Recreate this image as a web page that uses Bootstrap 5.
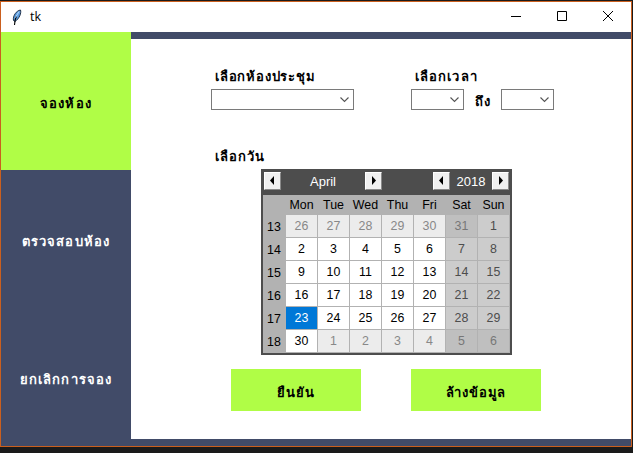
<!DOCTYPE html>
<html lang="th">
<head>
<meta charset="utf-8">
<title>tk</title>
<link href="https://cdn.jsdelivr.net/npm/bootstrap@5.3.0/dist/css/bootstrap.min.css" rel="stylesheet">
<style>
html,body{height:453px;overflow:hidden}
body{background:#1a1a1a;padding:1px 1px 6px 0;font-family:"Liberation Sans","DejaVu Sans",sans-serif;color:#000}
.win{width:632px;height:446px;border:1px solid #ca5f1e;background:#fff}
.titlebar{height:30px;font:12.5px/30px "Open Sans","Noto Sans",sans-serif}
.feather{margin-left:10px}
.ctl{width:46px;height:30px}
.main-area{height:414px;background:#414b68}
.side{width:130px}
.side-btn{height:138px;border:0;border-radius:0;padding:5px 0 0;color:#fff;background:#414b68}
.side-btn.on{background:#b0fd46;color:#000}
.th{font-size:13px;font-weight:700;line-height:20px;white-space:nowrap;letter-spacing:1.1px}
.th.tight{letter-spacing:.8px}
.field-label{padding-left:4px}
.date-label{padding:37px 0 0 4px}
.panel{width:500px;height:400px;margin-top:7px;padding:28px 0 0 80px}
.combo{height:21px;border:1px solid #7a7a7a;padding-right:4px}
.w-room{width:143px}.w-time{width:53px}
.combo-row{height:21px;margin-top:2px}
.until{width:37px;padding:3px 0 0 2px}
.col-room{width:200px}
.cal{width:251px;height:186px;border:2px solid #4d4d4d;border-top:0;margin:2px 0 0 50px;background:#b2b2b2}
.cal-head{height:26px;background:#4d4d4d;color:#fff;font-size:13px;line-height:25px;padding:0 1px}
.arr{width:17px;height:18px;margin-top:3px;background:#f0f0f0;border:1px solid #fff;border-right-color:#8a8a8a;border-bottom-color:#8a8a8a}
.arr svg{display:block}
.mon{width:84px}.yr{width:42px}
.cal-grid{display:grid;grid-template-columns:22px repeat(7,31px);grid-template-rows:19px repeat(6,22px);gap:1px;font-size:12.4px;text-align:center;line-height:22px}
.cal-grid>*{background:#fff}
.cal-grid .h,.cal-grid .w{background:#b2b2b2}
.cal-grid .h{line-height:20px}.cal-grid .w{line-height:24px}
.cal-grid .o{background:#ececec;color:#888}
.cal-grid .e{background:#ccc;color:#4d4d4d}
.cal-grid .x{background:#bfbfbf;color:#777}
.cal-grid .s{background:#0078d7;color:#fff}
.actions{gap:50px;padding:14px 0 0 20px}
.act{width:130px;height:42px;border:0;border-radius:0;background:#b0fd46;color:#000;padding:5px 0 0}
</style>
<script src="https://cdn.jsdelivr.net/npm/bootstrap@5.3.0/dist/js/bootstrap.bundle.min.js"></script>
</head>
<body>
<div class="win">
<header class="titlebar d-flex align-items-center">
<svg class="feather" width="12" height="17" viewBox="0 0 12 17"><path d="M2.500 11.500C1.500 7 5.500 1.500 9.500 1C10.500 4 8.500 9.500 4 12.500Z" fill="#5b9de0" stroke="#142338" stroke-width=".9"/><path d="M5.500 7C4 10 3.800 12 3.500 16" fill="none" stroke="#000" stroke-width="1.100"/><path d="M8 2.500L4.500 8.500" stroke="#b5d6f8"/></svg>
<span style="margin-left:7px">tk</span>
<svg class="ctl ms-auto" viewBox="0 0 46 30"><path d="M18 14.500H28" stroke="#000"/></svg>
<svg class="ctl" viewBox="0 0 46 30"><path d="M18.500 9.500h9v9h-9z" fill="none" stroke="#000"/></svg>
<svg class="ctl" viewBox="0 0 46 30"><path d="M18 9L28 19M28 9L18 19" stroke="#000"/></svg>
</header>
<div class="main-area d-flex">
<nav class="side d-flex flex-column">
<button class="btn side-btn on th">จองห้อง</button>
<button class="btn side-btn th">ตรวจสอบห้อง</button>
<button class="btn side-btn th">ยกเลิกการจอง</button>
</nav>
<main class="panel bg-white">
<section class="d-flex">
<div class="col-room"><div class="th tight field-label">เลือกห้องประชุม</div>
<div class="combo-row d-flex"><div class="combo w-room d-flex align-items-center justify-content-end"><svg width="9" height="6"><path d="M.5 .5L4.500 4.500L8.500 .5" fill="none" stroke="#555" stroke-width="1.100"/></svg></div></div></div>
<div><div class="th field-label">เลือกเวลา</div>
<div class="combo-row d-flex"><div class="combo w-time d-flex align-items-center justify-content-end"><svg width="9" height="6"><path d="M.5 .5L4.500 4.500L8.500 .5" fill="none" stroke="#555" stroke-width="1.100"/></svg></div>
<div class="th until text-center">ถึง</div>
<div class="combo w-time d-flex align-items-center justify-content-end"><svg width="9" height="6"><path d="M.5 .5L4.500 4.500L8.500 .5" fill="none" stroke="#555" stroke-width="1.100"/></svg></div></div></div>
</section>
<div class="th date-label">เลือกวัน</div>
<div class="cal">
<div class="cal-head d-flex">
<div class="arr"><svg width="15" height="16"><path d="M9 3v9L5 7.500z"/></svg></div><div class="mon text-center">April</div><div class="arr"><svg width="15" height="16"><path d="M6 3v9l4-4.500z"/></svg></div>
<div class="arr ms-auto"><svg width="15" height="16"><path d="M9 3v9L5 7.500z"/></svg></div><div class="yr text-center">2018</div><div class="arr"><svg width="15" height="16"><path d="M6 3v9l4-4.500z"/></svg></div>
</div>
<div class="cal-grid">
<div class="h"></div><div class="h">Mon</div><div class="h">Tue</div><div class="h">Wed</div><div class="h">Thu</div><div class="h">Fri</div><div class="h">Sat</div><div class="h">Sun</div>
<div class="w">13</div><div class="o">26</div><div class="o">27</div><div class="o">28</div><div class="o">29</div><div class="o">30</div><div class="x">31</div><div class="e">1</div>
<div class="w">14</div><div>2</div><div>3</div><div>4</div><div>5</div><div>6</div><div class="e">7</div><div class="e">8</div>
<div class="w">15</div><div>9</div><div>10</div><div>11</div><div>12</div><div>13</div><div class="e">14</div><div class="e">15</div>
<div class="w">16</div><div>16</div><div>17</div><div>18</div><div>19</div><div>20</div><div class="e">21</div><div class="e">22</div>
<div class="w">17</div><div class="s">23</div><div>24</div><div>25</div><div>26</div><div>27</div><div class="e">28</div><div class="e">29</div>
<div class="w">18</div><div>30</div><div class="o">1</div><div class="o">2</div><div class="o">3</div><div class="o">4</div><div class="x">5</div><div class="x">6</div>
</div>
</div>
<div class="actions d-flex">
<button class="btn act th">ยืนยัน</button>
<button class="btn act th tight">ล้างข้อมูล</button>
</div>
</main>
</div>
</div>
</body>
</html>
